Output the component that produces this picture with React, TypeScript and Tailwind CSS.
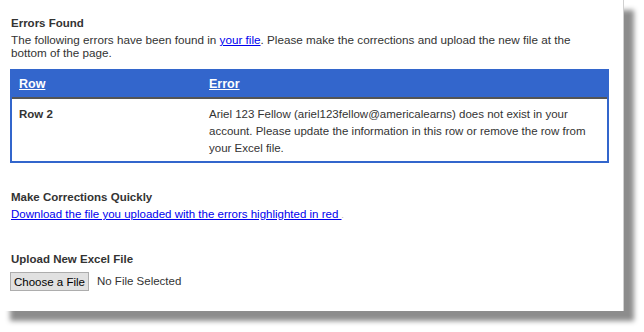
import React from "react";

export default function App() {
  return (
    <div className="w-[644px] h-[332px] bg-white overflow-hidden" style={{ fontFamily: '"Liberation Sans", Arial, sans-serif' }}>
      <div className="w-[624px] h-[311px] bg-white border-r border-[#d0d0d0] shadow-[10px_10px_5px_rgba(0,0,0,0.45)] pl-[11px] pr-[13px] pt-[16px] text-[#333333] text-[11.5px]">
        <div className="font-bold leading-[14px]">Errors Found</div>
        <p className="leading-[13px] mt-[3px] text-[11.7px] w-[570px]">
          The following errors have been found in{" "}
          <a className="text-[#0000ee] underline">your file</a>. Please make the corrections and upload the new file at the bottom of the page.
        </p>
        <div className="mt-[10px] -ml-[1px] w-[599px] border-2 border-[#3366cc]">
          <div className="flex bg-[#3366cc] h-[28px] items-center text-white font-bold text-[12.5px] border-b-2 border-[#555555]">
            <div className="w-[188px] pl-[7px]"><span className="underline">Row</span></div>
            <div className="pl-[9px]"><span className="underline">Error</span></div>
          </div>
          <div className="flex h-[62px] pt-[7px] text-[11.5px] leading-[17px]">
            <div className="w-[188px] pl-[7px] font-bold">Row 2</div>
            <div className="pl-[9px] w-[390px]">
              Ariel 123 Fellow (ariel123fellow@americalearns) does not exist in your account. Please update the information in this row or remove the row from your Excel file.
            </div>
          </div>
        </div>
        <div className="mt-[27px] font-bold leading-[14px]">Make Corrections Quickly</div>
        <div className="leading-[14px] mt-[3px]">
          <a className="text-[#0000ee] underline">Download the file you uploaded with the errors highlighted in red </a>
          <span className="text-[#999] text-[8px]">.</span>
        </div>
        <div className="mt-[29px] font-bold leading-[14px]">Upload New Excel File</div>
        <div className="mt-[6px] flex items-center -ml-[1px]">
          <button className="h-[19px] px-[3px] bg-[#e1e1e1] border border-[#adadad] text-[11.5px] text-black leading-[14px]">Choose a File</button>
          <span className="ml-[8px] text-[#333]">No File Selected</span>
        </div>
      </div>
    </div>
  );
}
